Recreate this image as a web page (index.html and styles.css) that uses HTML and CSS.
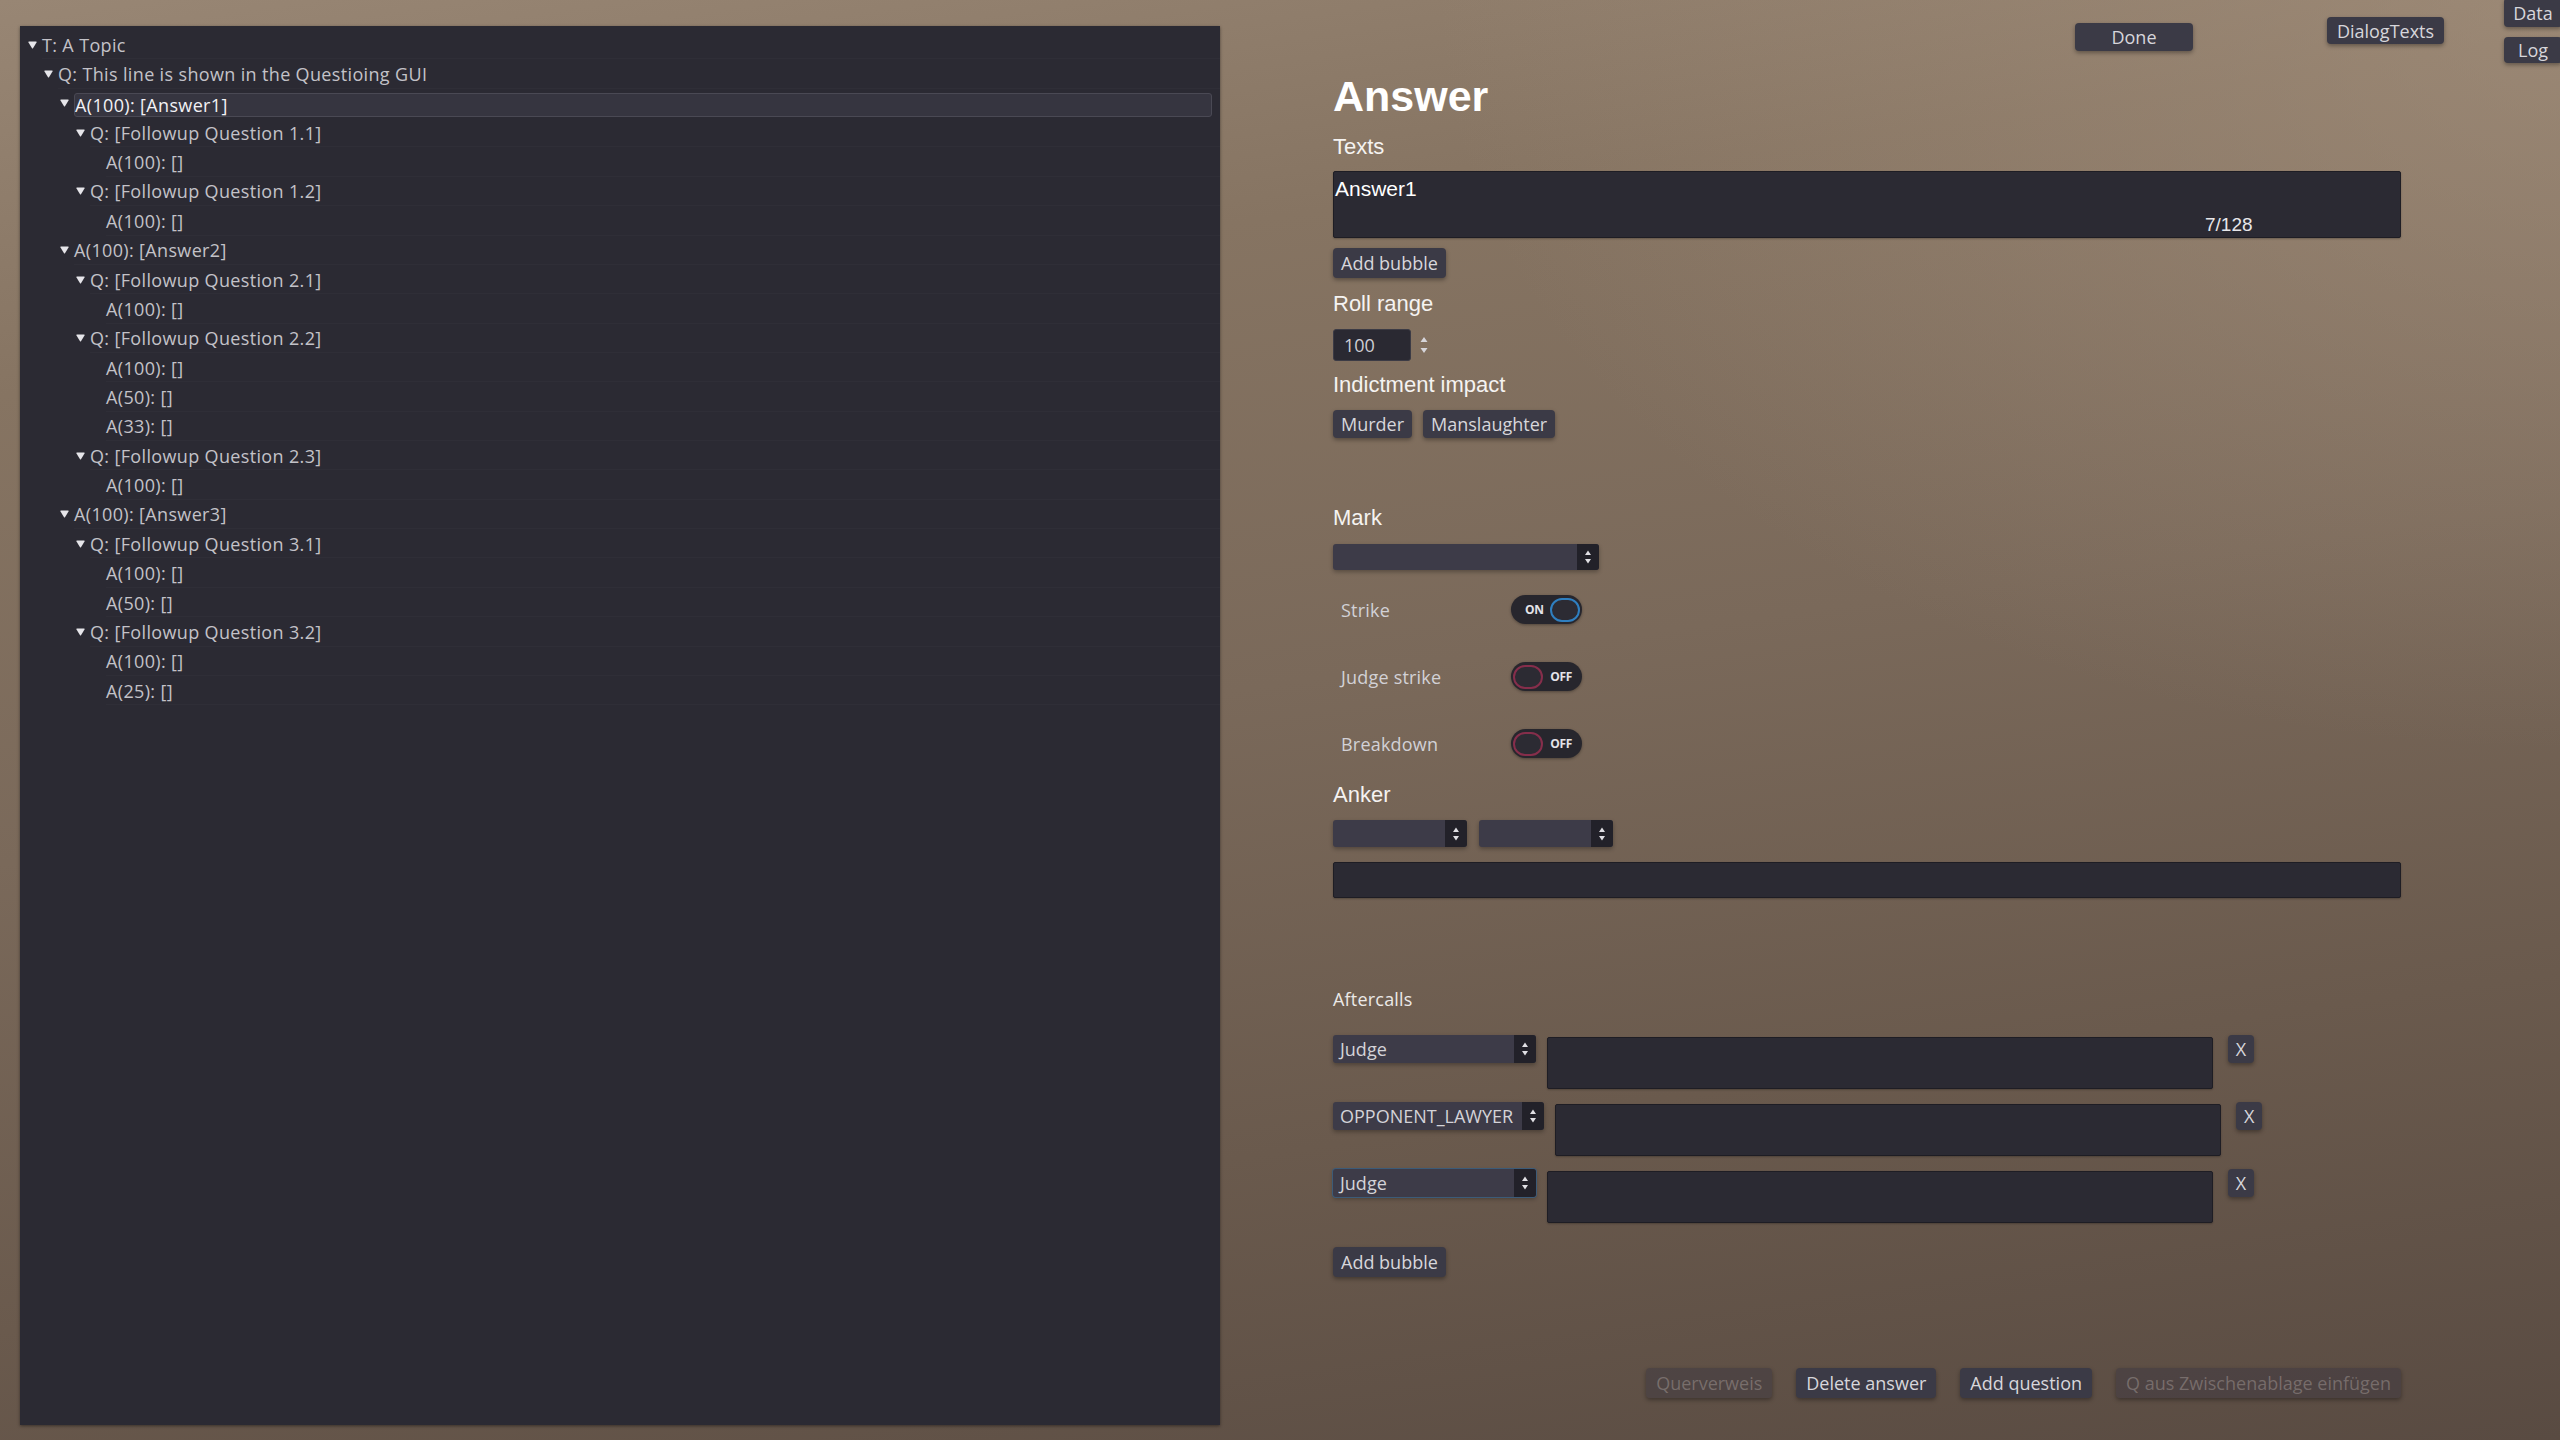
FILE: index.html
```html
<!DOCTYPE html>
<html lang="en">
<head>
<meta charset="utf-8">
<title>Dialog Editor</title>
<link rel="stylesheet" href="styles.css">
</head>
<body>
<div class="tree">
  <div class="row l0"><span class="tw"><svg viewBox="0 0 9 8"><path d="M1 .6H8Q9 .6 8.5 1.6L5 7.2Q4.5 7.9 4 7.2L.5 1.6Q0 .6 1 .6Z"/></svg></span><span class="label">T: A Topic</span></div>
  <div class="row l1"><span class="tw"><svg viewBox="0 0 9 8"><path d="M1 .6H8Q9 .6 8.5 1.6L5 7.2Q4.5 7.9 4 7.2L.5 1.6Q0 .6 1 .6Z"/></svg></span><span class="label">Q: This line is shown in the Questioing GUI</span></div>
  <div class="row l2"><span class="tw"><svg viewBox="0 0 9 8"><path d="M1 .6H8Q9 .6 8.5 1.6L5 7.2Q4.5 7.9 4 7.2L.5 1.6Q0 .6 1 .6Z"/></svg></span><span class="label sel">A(100): [Answer1]</span></div>
  <div class="row l3"><span class="tw"><svg viewBox="0 0 9 8"><path d="M1 .6H8Q9 .6 8.5 1.6L5 7.2Q4.5 7.9 4 7.2L.5 1.6Q0 .6 1 .6Z"/></svg></span><span class="label">Q: [Followup Question 1.1]</span></div>
  <div class="row l4"><span class="tw"></span><span class="label">A(100): []</span></div>
  <div class="row l3"><span class="tw"><svg viewBox="0 0 9 8"><path d="M1 .6H8Q9 .6 8.5 1.6L5 7.2Q4.5 7.9 4 7.2L.5 1.6Q0 .6 1 .6Z"/></svg></span><span class="label">Q: [Followup Question 1.2]</span></div>
  <div class="row l4"><span class="tw"></span><span class="label">A(100): []</span></div>
  <div class="row l2"><span class="tw"><svg viewBox="0 0 9 8"><path d="M1 .6H8Q9 .6 8.5 1.6L5 7.2Q4.5 7.9 4 7.2L.5 1.6Q0 .6 1 .6Z"/></svg></span><span class="label">A(100): [Answer2]</span></div>
  <div class="row l3"><span class="tw"><svg viewBox="0 0 9 8"><path d="M1 .6H8Q9 .6 8.5 1.6L5 7.2Q4.5 7.9 4 7.2L.5 1.6Q0 .6 1 .6Z"/></svg></span><span class="label">Q: [Followup Question 2.1]</span></div>
  <div class="row l4"><span class="tw"></span><span class="label">A(100): []</span></div>
  <div class="row l3"><span class="tw"><svg viewBox="0 0 9 8"><path d="M1 .6H8Q9 .6 8.5 1.6L5 7.2Q4.5 7.9 4 7.2L.5 1.6Q0 .6 1 .6Z"/></svg></span><span class="label">Q: [Followup Question 2.2]</span></div>
  <div class="row l4"><span class="tw"></span><span class="label">A(100): []</span></div>
  <div class="row l4"><span class="tw"></span><span class="label">A(50): []</span></div>
  <div class="row l4"><span class="tw"></span><span class="label">A(33): []</span></div>
  <div class="row l3"><span class="tw"><svg viewBox="0 0 9 8"><path d="M1 .6H8Q9 .6 8.5 1.6L5 7.2Q4.5 7.9 4 7.2L.5 1.6Q0 .6 1 .6Z"/></svg></span><span class="label">Q: [Followup Question 2.3]</span></div>
  <div class="row l4"><span class="tw"></span><span class="label">A(100): []</span></div>
  <div class="row l2"><span class="tw"><svg viewBox="0 0 9 8"><path d="M1 .6H8Q9 .6 8.5 1.6L5 7.2Q4.5 7.9 4 7.2L.5 1.6Q0 .6 1 .6Z"/></svg></span><span class="label">A(100): [Answer3]</span></div>
  <div class="row l3"><span class="tw"><svg viewBox="0 0 9 8"><path d="M1 .6H8Q9 .6 8.5 1.6L5 7.2Q4.5 7.9 4 7.2L.5 1.6Q0 .6 1 .6Z"/></svg></span><span class="label">Q: [Followup Question 3.1]</span></div>
  <div class="row l4"><span class="tw"></span><span class="label">A(100): []</span></div>
  <div class="row l4"><span class="tw"></span><span class="label">A(50): []</span></div>
  <div class="row l3"><span class="tw"><svg viewBox="0 0 9 8"><path d="M1 .6H8Q9 .6 8.5 1.6L5 7.2Q4.5 7.9 4 7.2L.5 1.6Q0 .6 1 .6Z"/></svg></span><span class="label">Q: [Followup Question 3.2]</span></div>
  <div class="row l4"><span class="tw"></span><span class="label">A(100): []</span></div>
  <div class="row l4"><span class="tw"></span><span class="label">A(25): []</span></div>
</div>

<div class="editor">
  <h1 class="heading">Answer</h1>
  <div class="sect m-texts">Texts</div>
  <div class="textarea big"><span class="ta-text">Answer1</span><span class="counter">7/128</span></div>
  <div class="btn m-add1">Add bubble</div>

  <div class="sect m-roll">Roll range</div>
  <div class="spin">
    <div class="spin-in">100</div>
    <svg class="spin-ar" viewBox="0 0 8 18"><path d="M4 1L7.5 6H.5Z M4 17L7.5 12H.5Z"/></svg>
  </div>

  <div class="sect m-ind">Indictment impact</div>
  <div class="btnrow">
    <div class="btn">Murder</div>
    <div class="btn">Manslaughter</div>
  </div>

  <div class="sect m-mark">Mark</div>
  <div class="dd mark-dd"><span class="v"></span><span class="ar"><svg viewBox="0 0 8 16"><path d="M4 1.5L7 6H1Z M4 14.5L7 10H1Z"/></svg></span></div>

  <div class="tog-row first">
    <span class="tog-label">Strike</span>
    <span class="tog on"><span class="tog-txt">ON</span><span class="ring"></span></span>
  </div>
  <div class="tog-row">
    <span class="tog-label">Judge strike</span>
    <span class="tog off"><span class="ring"></span><span class="tog-txt">OFF</span></span>
  </div>
  <div class="tog-row">
    <span class="tog-label">Breakdown</span>
    <span class="tog off"><span class="ring"></span><span class="tog-txt">OFF</span></span>
  </div>

  <div class="sect m-anker">Anker</div>
  <div class="anker-dds">
    <div class="dd anker-dd"><span class="v"></span><span class="ar"><svg viewBox="0 0 8 16"><path d="M4 1.5L7 6H1Z M4 14.5L7 10H1Z"/></svg></span></div>
    <div class="dd anker-dd"><span class="v"></span><span class="ar"><svg viewBox="0 0 8 16"><path d="M4 1.5L7 6H1Z M4 14.5L7 10H1Z"/></svg></span></div>
  </div>
  <div class="textarea anker-text"></div>

  <div class="small-label">Aftercalls</div>
  <div class="ac-list">
    <div class="ac-row">
      <div class="dd ac-dd"><span class="v">Judge</span><span class="ar"><svg viewBox="0 0 8 16"><path d="M4 1.5L7 6H1Z M4 14.5L7 10H1Z"/></svg></span></div>
      <div class="textarea ac-text"></div>
      <div class="btn xbtn">X</div>
    </div>
    <div class="ac-row">
      <div class="dd ac-dd"><span class="v">OPPONENT_LAWYER</span><span class="ar"><svg viewBox="0 0 8 16"><path d="M4 1.5L7 6H1Z M4 14.5L7 10H1Z"/></svg></span></div>
      <div class="textarea ac-text"></div>
      <div class="btn xbtn">X</div>
    </div>
    <div class="ac-row">
      <div class="dd ac-dd focus"><span class="v">Judge</span><span class="ar"><svg viewBox="0 0 8 16"><path d="M4 1.5L7 6H1Z M4 14.5L7 10H1Z"/></svg></span></div>
      <div class="textarea ac-text"></div>
      <div class="btn xbtn">X</div>
    </div>
  </div>
  <div class="btn m-add2">Add bubble</div>

  <div class="actions">
    <div class="btn wide disabled">Querverweis</div>
    <div class="btn wide">Delete answer</div>
    <div class="btn wide">Add question</div>
    <div class="btn wide disabled">Q aus Zwischenablage einfügen</div>
  </div>
</div>

<div class="btn float done">Done</div>
<div class="btn float dialogtexts">DialogTexts</div>
<div class="btn float data">Data</div>
<div class="btn float log">Log</div>
</body>
</html>
```

FILE: styles.css
```css
* { box-sizing: border-box; }
html, body { margin: 0; padding: 0; }
body {
  width: 2560px;
  height: 1440px;
  overflow: hidden;
  position: relative;
  display: flex;
  align-items: flex-start;
  font-family: "Open Sans", "Noto Sans", "DejaVu Sans", sans-serif;
  font-size: 18px;
  color: #d4d3d8;
  background:
    radial-gradient(ellipse 1500px 1000px at 100% 0%, rgba(172,152,132,.55), rgba(172,152,132,0) 75%),
    linear-gradient(172deg, #988674 0%, #867462 22%, #7a695a 48%, #6a5a4d 74%, #594b42 100%);
}

/* ---------- tree ---------- */
.tree {
  flex: none;
  margin: 26px 0 0 20px;
  width: 1200px;
  height: 1399px;
  padding-top: 4px;
  background: #2b2a33;
  box-shadow: 0 1px 3px rgba(0,0,0,.45);
}
.row {
  height: 29.36px;
  display: flex;
  align-items: stretch;
}
.l0 { padding-left: 8px; }
.l1 { padding-left: 24px; }
.l2 { padding-left: 40px; }
.l3 { padding-left: 56px; }
.l4 { padding-left: 72px; }
.tw {
  flex: none;
  width: 14px;
  display: flex;
  align-items: center;
}
.tw svg { width: 9px; height: 8px; fill: #e6e5ea; }
.label {
  flex: 1;
  display: flex;
  align-items: center;
  white-space: nowrap;
  letter-spacing: .35px;
  color: #c3c2c8;
  border-bottom: 1px solid #2f2e37;
  padding-top: 1px;
}
.label.sel {
  flex: 1;
  align-self: center;
  height: 24px;
  margin: 3px 8px 0 0;
  padding-left: 0;
  background: #363540;
  border: 1px solid #4a4954;
  border-radius: 3px;
  color: #f2f1f5;
}

/* ---------- editor ---------- */
.editor {
  flex: none;
  margin-left: 113px;
  width: 1068px;
  padding-top: 71px;
  display: flex;
  flex-direction: column;
  align-items: flex-start;
}
.heading {
  margin: 0;
  font-family: "Liberation Sans", Arial, sans-serif;
  font-weight: bold;
  font-size: 43px;
  line-height: 50px;
  color: #ffffff;
}
.sect {
  font-family: "Liberation Sans", Arial, sans-serif;
  font-size: 22px;
  line-height: 26px;
  color: #f5f3f1;
}
.m-texts { margin-top: 13px; }
.m-roll { margin-top: 13px; }
.m-ind { margin-top: 11px; }
.m-mark { margin-top: 67px; }
.m-anker { margin-top: 24px; }

.textarea {
  background: #2b2a33;
  border: 1px solid #1e1d24;
  border-radius: 2px;
  box-shadow: 0 1px 2px rgba(0,0,0,.25);
}
.textarea.big {
  position: relative;
  margin-top: 11px;
  width: 1068px;
  height: 67px;
  padding-left: 1px;
}
.ta-text {
  display: block;
  font-family: "Liberation Sans", Arial, sans-serif;
  font-size: 21px;
  line-height: 34px;
  color: #ffffff;
}
.counter {
  position: absolute;
  left: 871px;
  bottom: 0;
  font-family: "Liberation Sans", Arial, sans-serif;
  font-size: 19px;
  line-height: 24px;
  color: #e8e7ea;
}

.btn {
  display: inline-flex;
  align-items: center;
  justify-content: center;
  height: 29px;
  padding: 0 8px;
  background: #3b3a46;
  border-radius: 4px;
  box-shadow: 0 2px 4px rgba(0,0,0,.35);
  color: #d7d6db;
  white-space: nowrap;
  line-height: 1;
}
.m-add1 { margin-top: 10px; height: 30px; }
.m-add2 { margin-top: 24px; height: 30px; }

.spin {
  margin-top: 12px;
  display: flex;
  align-items: center;
  gap: 9px;
}
.spin-in {
  width: 78px;
  height: 32px;
  padding-left: 10px;
  display: flex;
  align-items: center;
  background: #2a2932;
  border: 1px solid #3c3b45;
  border-radius: 3px;
  color: #cfced4;
}
.spin-ar { width: 8px; height: 18px; fill: #d6d5da; }

.btnrow {
  margin-top: 12px;
  display: flex;
  gap: 11px;
}
.btnrow .btn { height: 28px; }

.dd {
  display: flex;
  align-items: stretch;
  height: 27px;
  border-radius: 3px;
  background: #3d3b48;
  box-shadow: 0 2px 4px rgba(0,0,0,.3);
}
.dd .v {
  flex: 1;
  display: flex;
  align-items: center;
  padding: 0 9px 0 7px;
  color: #d4d3d8;
  white-space: nowrap;
}
.dd .ar {
  flex: none;
  width: 22px;
  display: flex;
  align-items: center;
  justify-content: center;
  background: #222129;
  border-radius: 0 3px 3px 0;
}
.dd .ar svg { width: 8px; height: 16px; fill: #e0dfe4; }
.mark-dd { margin-top: 13px; width: 266px; height: 26px; }

.tog-row {
  margin-top: 38px;
  height: 29px;
  display: flex;
  align-items: center;
  padding-left: 8px;
}
.tog-row.first { margin-top: 25px; }
.tog-label { width: 170px; color: #d2d1d6; letter-spacing: .2px; }
.tog {
  width: 71px;
  height: 29px;
  border-radius: 15px;
  background: #27262d;
  box-shadow: 0 1px 3px rgba(0,0,0,.35);
  display: flex;
  align-items: center;
  justify-content: space-between;
  padding: 0 2px;
}
.tog-txt {
  font-size: 12px;
  font-weight: bold;
  color: #e4e3e8;
  letter-spacing: -.3px;
}
.tog.on .tog-txt { margin-left: 12px; }
.tog.off .tog-txt { margin-right: 8px; }
.ring {
  width: 30px;
  height: 24px;
  border-radius: 12px;
  background: #2c2b33;
}
.tog.on .ring { border: 2px solid #2f7fc0; }
.tog.off .ring { border: 2px solid #862e4b; }

.anker-dds {
  margin-top: 12px;
  display: flex;
  gap: 12px;
}
.anker-dd { width: 134px; height: 27px; }
.anker-text {
  margin-top: 15px;
  width: 1068px;
  height: 36px;
}

.small-label {
  margin-top: 88px;
  line-height: 26px;
  color: #ebe9e7;
  letter-spacing: .2px;
}
.ac-list {
  margin-top: 23px;
  display: flex;
  flex-direction: column;
  gap: 13px;
}
.ac-row {
  display: flex;
  align-items: flex-start;
  height: 54px;
}
.ac-dd { min-width: 203px; height: 28px; }
.ac-dd.focus { box-shadow: 0 0 0 1px #3c5b78, 0 2px 4px rgba(0,0,0,.3); }
.ac-text {
  margin: 2px 0 0 11px;
  width: 666px;
  height: 52px;
}
.xbtn {
  margin-left: 15px;
  width: 26px;
  height: 28px;
  padding: 0;
}

.actions {
  margin-top: 91px;
  width: 1068px;
  display: flex;
  justify-content: flex-end;
  gap: 24px;
}
.btn.wide { padding: 0 10px; height: 30px; }
.btn.disabled {
  background: rgba(58,54,64,.45);
  color: rgba(190,180,175,.38);
}

/* floating overlay buttons */
.float { position: absolute; }
.done { left: 2075px; top: 23px; width: 118px; height: 28px; }
.dialogtexts { left: 2327px; top: 17px; width: 117px; height: 27px; }
.data { left: 2504px; top: -2px; width: 58px; height: 29px; }
.log { left: 2504px; top: 37px; width: 58px; height: 26px; }
```
